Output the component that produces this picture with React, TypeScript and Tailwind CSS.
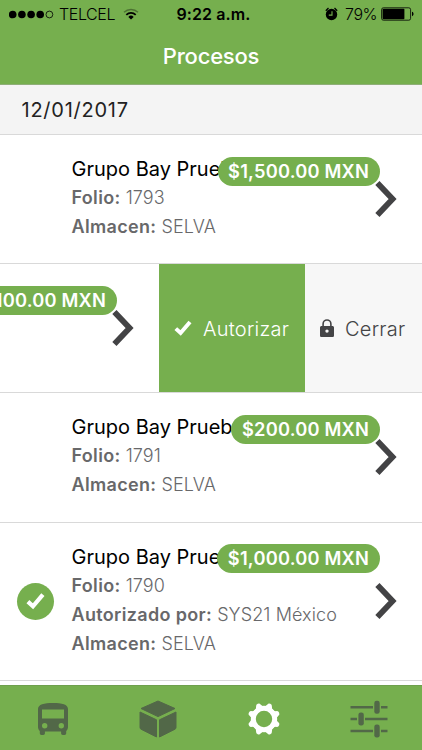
import React from 'react';

interface Proceso {
  folio: string;
  monto: string;
  almacen: string;
  autorizadoPor?: string;
}

const procesos: Proceso[] = [
  { folio: '1793', monto: '$1,500.00 MXN', almacen: 'SELVA' },
  { folio: '1791', monto: '$200.00 MXN', almacen: 'SELVA' },
  { folio: '1790', monto: '$1,000.00 MXN', almacen: 'SELVA', autorizadoPor: 'SYS21 México' },
];

function Chevron() {
  return (
    <svg className="w-[22px] h-[38px] shrink-0 text-[#434345]" viewBox="0 0 22 38" fill="none">
      <path d="M2.4 2.9 17.6 19 2.4 35.1" stroke="currentColor" strokeWidth="5.8" strokeLinejoin="miter" />
    </svg>
  );
}

function Check({ className }: { className: string }) {
  return (
    <svg className={className} viewBox="0 0 18 16" fill="none">
      <path d="M1.8 8.6 6.6 13 16 2" stroke="currentColor" strokeWidth="4" strokeLinejoin="miter" strokeLinecap="butt" />
    </svg>
  );
}

function Badge({ children }: { children: React.ReactNode }) {
  return (
    <span className="absolute right-[42.5px] top-[21.5px] h-[29px] px-[10.5px] rounded-full bg-[#76af4e] text-white text-[18.3px] leading-[29px] font-semibold tracking-[0.2px] whitespace-nowrap">
      {children}
    </span>
  );
}

function Dato({ label, value }: { label: string; value: string }) {
  return (
    <p className="h-[29px] leading-[29px] text-[18px] text-[#68686a] whitespace-nowrap">
      <span className="font-semibold tracking-[0.33px]">{label}:</span>{' '}
      <span className="font-[350] tracking-[0.1px]">{value}</span>
    </p>
  );
}

function ProcesoRow({ proceso }: { proceso: Proceso }) {
  return (
    <div className={`relative flex border-b border-[#d9d9d9] ${proceso.autorizadoPor ? 'h-[158.6px]' : 'h-[129.2px]'}`}>
      <div className="w-[71.5px] shrink-0 flex items-center pl-[17px]">
        {proceso.autorizadoPor && (
          <div className="size-[37px] rounded-full bg-[#76af4e] text-white flex items-center justify-center">
            <Check className="w-[19px] h-[18px]" />
          </div>
        )}
      </div>
      <div className="flex-1 min-w-0 pt-[20px]">
        <h2 className="h-[28px] leading-[28px] text-[20px] text-black whitespace-nowrap">
          Grupo Bay Prueba
        </h2>
        <Dato label="Folio" value={proceso.folio} />
        {proceso.autorizadoPor && <Dato label="Autorizado por" value={proceso.autorizadoPor} />}
        <Dato label="Almacen" value={proceso.almacen} />
      </div>
      <Badge>{proceso.monto}</Badge>
      <div className="flex items-center pr-[25px]">
        <Chevron />
      </div>
    </div>
  );
}

// Fila deslizada a la izquierda con sus acciones a la vista
function SwipedRow() {
  return (
    <div className="flex h-[129.2px] border-b border-[#d9d9d9]">
      <div className="relative w-[159px] shrink-0 flex items-center justify-end pr-[25.5px] overflow-hidden">
        <Badge>$100.00 MXN</Badge>
        <Chevron />
      </div>
      <button className="w-[146px] shrink-0 bg-[#76af4e] text-white flex items-center pl-[15px]">
        <Check className="w-[18px] h-[16px]" />
        <span className="ml-[11px] pt-[2px] text-[20px] font-[350] tracking-[0.25px]">Autorizar</span>
      </button>
      <button className="flex-1 bg-[#f7f7f7] text-[#444446] flex items-center pl-[15px]">
        <svg className="w-[14px] h-[19px]" viewBox="0 0 14 19">
          <path d="M3.1 8V4.9a3.9 3.9 0 0 1 7.8 0V8" fill="none" stroke="currentColor" strokeWidth="1.6" />
          <path fill="currentColor" fillRule="evenodd" d="M1.6 7h10.8c.9 0 1.6.7 1.6 1.6v7.8c0 .9-.7 1.6-1.6 1.6H1.6C.7 18 0 17.3 0 16.4V8.6C0 7.7.7 7 1.6 7ZM7 10.4a1.7 1.7 0 1 0 0 3.4 1.7 1.7 0 0 0 0-3.4Z" />
        </svg>
        <span className="ml-[11px] pt-[2px] text-[20px] font-[350] tracking-[0.25px]">Cerrar</span>
      </button>
    </div>
  );
}

function StatusBar() {
  return (
    <div className="flex items-center h-[28px] pl-[9px] pr-[8px] text-black text-[16px]">
      <div className="flex flex-1 items-center">
        <svg className="w-[45px] h-[9px]" viewBox="0 0 45 9">
          <circle cx="3.7" cy="4.5" r="3.8" />
          <circle cx="12.9" cy="4.5" r="3.8" />
          <circle cx="22.1" cy="4.5" r="3.8" />
          <circle cx="31.2" cy="4.5" r="3.8" />
          <circle cx="40.4" cy="4.5" r="3.4" fill="none" stroke="black" strokeWidth="0.8" />
        </svg>
        <span className="ml-[5px] font-[350] tracking-[-0.4px]">TELCEL</span>
        <svg className="ml-[8px] w-[16px] h-[12px]" viewBox="0 0 16 12" fill="none" stroke="black">
          <path d="M1 4.3a10 10 0 0 1 14 0" strokeWidth="1.5" opacity="0.35" />
          <path d="M3.3 6.9a6.7 6.7 0 0 1 9.4 0" strokeWidth="1.8" />
          <path d="M8 11.6 5.3 8.9a3.9 3.9 0 0 1 5.4 0Z" fill="black" stroke="none" />
        </svg>
      </div>
      <span className="pl-[4px] font-semibold tracking-[0.1px]">9:22 a.m.</span>
      <div className="flex flex-1 items-center justify-end">
        <svg className="w-[13px] h-[14px]" viewBox="0 0 13 14">
          <circle cx="6.5" cy="7.5" r="5.7" />
          <path d="M.8 3.8 3.5 1M9.5 1l2.7 2.8" stroke="black" strokeWidth="1.3" />
          <path d="M7 4.3v3.8H3.8" fill="none" stroke="#76af4e" strokeWidth="1.1" />
        </svg>
        <span className="ml-[7px] font-[350] tracking-[-0.5px]">79%</span>
        <svg className="ml-[4px] w-[33px] h-[14px]" viewBox="0 0 33 14">
          <rect x=".6" y=".8" width="29" height="12.4" rx="1.8" fill="none" stroke="black" strokeWidth="0.8" />
          <rect x="1.6" y="1.8" width="21.8" height="10.4" rx="0.8" />
          <path d="M31 4.8c2 .5 2 3.9 0 4.4Z" />
        </svg>
      </div>
    </div>
  );
}

const teeth = [0, 45, 90, 135, 180, 225, 270, 315];

function TabBar() {
  return (
    <nav className="grid grid-cols-4 h-[65px] shrink-0 bg-[#76af4e] border-t border-[#6fa04d] text-[#526848] items-center justify-items-center pt-[2px]">
      <svg className="w-[30px] h-[32px]" viewBox="0 0 30 32">
        <path
          fill="currentColor"
          fillRule="evenodd"
          d="M0 6C0 1.5 6 0 15 0s15 1.5 15 6v18c0 1.5-.7 3-1.8 4v2.3c0 1-.7 1.7-1.7 1.7h-1.7c-1 0-1.7-.7-1.7-1.7v-1.8H6.9v1.8c0 1-.7 1.7-1.7 1.7H3.5c-1 0-1.7-.7-1.7-1.7V28C.7 27 0 25.5 0 24V6ZM4 6.5V15.5H26V6.5H4ZM6.7 20a2.7 2.7 0 1 0 0 5.4 2.7 2.7 0 0 0 0-5.4ZM23.3 20a2.7 2.7 0 1 0 0 5.4 2.7 2.7 0 0 0 0-5.4Z"
        />
      </svg>
      <svg className="w-[38px] h-[38px]" viewBox="0 0 38 38" fill="currentColor" stroke="currentColor" strokeWidth="1" strokeLinejoin="round">
        <path d="M19 1 36 8.5 19 16.6 2 8.5Z" />
        <path d="M1 12 17.5 19.8V37L2 29.2Q1 28.7 1 27.5Z" />
        <path d="M37 12 20.5 19.8V37L36 29.2Q37 28.7 37 27.5Z" />
      </svg>
      <svg className="w-[34px] h-[34px] text-white" viewBox="-17 -17 34 34">
        <circle r="10.7" fill="none" stroke="currentColor" strokeWidth="5" />
        {teeth.map((angle) => (
          <path
            key={angle}
            transform={`rotate(${angle + 22.5})`}
            d="M-6-11Q-3-12.2-2.4-14.8Q-2-16.4 0-16.4T2.4-14.8Q3-12.2 6-11Z"
            fill="currentColor"
          />
        ))}
      </svg>
      <svg className="w-[38px] h-[38px]" viewBox="0 0 38 38" fill="currentColor">
        <path d="M.5 6h22.5v2.5H.5ZM31 6h6.5v2.5H31ZM.5 17.8H7v2.5H.5ZM15 17.8h22.5v2.5H15ZM.5 29.8h22.5v2.5H.5ZM31 29.8h6.5v2.5H31Z" />
        <rect x="24.3" y=".7" width="5.4" height="13" rx="2.3" />
        <rect x="8.4" y="12.5" width="5.4" height="13" rx="2.3" />
        <rect x="24.3" y="24.5" width="5.4" height="13" rx="2.3" />
      </svg>
    </nav>
  );
}

export default function App() {
  return (
    <div className="w-[422px] h-[750px] flex flex-col overflow-hidden bg-white font-['Inter',sans-serif]">
      <header className="h-[85px] shrink-0 bg-[#76af4e] border-b border-[#8fae78]">
        <StatusBar />
        <h1 className="h-[56px] leading-[56px] text-center text-white text-[22px] font-medium tracking-[-0.2px]">Procesos</h1>
      </header>
      <main className="flex-1 min-h-0 overflow-hidden">
        <div className="h-[50px] bg-[#f4f4f4] border-b border-[#d9d9d9] pl-[21.5px] text-[20px] leading-[51px] tracking-[0.75px] text-[#222222]">
          12/01/2017
        </div>
        <ProcesoRow proceso={procesos[0]} />
        <SwipedRow />
        <ProcesoRow proceso={procesos[1]} />
        <ProcesoRow proceso={procesos[2]} />
      </main>
      <TabBar />
    </div>
  );
}
